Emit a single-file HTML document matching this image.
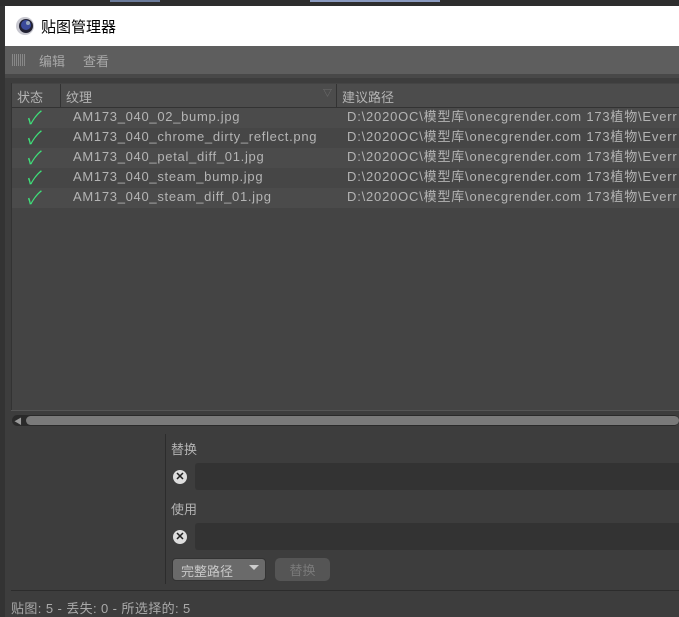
<!DOCTYPE html>
<html><head><meta charset="utf-8"><style>
*{margin:0;padding:0;box-sizing:border-box}
body{width:679px;height:617px;overflow:hidden;background:#3d3d3d;font-family:"Liberation Sans","Noto Sans CJK SC",sans-serif;font-size:13px;color:#b4b4b4;position:relative}
.abs{position:absolute}
.row{position:absolute;left:12px;width:667px;height:20px;line-height:20px;top:0}
.row .n{position:absolute;left:61px;letter-spacing:.7px;top:-1px}
.row .p{position:absolute;left:335px;white-space:nowrap;letter-spacing:.8px;top:-1px}
.chk{position:absolute;left:16px;top:1px;color:#3fe07a;font-size:18px;line-height:18px;transform:skewX(-12deg)}
</style></head><body>
<div class="abs" style="left:0;top:0;width:679px;height:6px;background:#2e2e2e"></div>
<div class="abs" style="left:110px;top:0;width:50px;height:2px;background:#6a7a9a"></div>
<div class="abs" style="left:310px;top:0;width:130px;height:2px;background:#8a9ac0"></div>
<div class="abs" style="left:0;top:6px;width:5px;height:611px;background:#333"></div>
<div class="abs" style="left:5px;top:6px;width:674px;height:40px;background:#fff"></div>
<svg class="abs" style="left:15px;top:16px" width="20" height="20"><circle cx="10" cy="10" r="9" fill="#c8c8d0"/><circle cx="11" cy="10" r="7" fill="#223"/><circle cx="11" cy="9" r="5" fill="#3a4a9a"/><circle cx="13" cy="7" r="2" fill="#9ab"/></svg>
<div class="abs" style="left:41px;top:16px;font-size:15px;color:#000">贴图管理器</div>
<div class="abs" style="left:5px;top:46px;width:674px;height:28px;background:#5e5e5e"></div>
<div class="abs" style="left:12px;top:54px;width:14px;height:12px;background:repeating-linear-gradient(90deg,#888 0 1px,transparent 1px 2px),repeating-linear-gradient(0deg,#5e5e5e 0 1px,transparent 1px 2px)"></div>
<div class="abs" style="left:39px;top:51px;color:#a8a8a8">编辑</div>
<div class="abs" style="left:83px;top:51px;color:#a8a8a8">查看</div>
<div class="abs" style="left:5px;top:74px;width:674px;height:4px;background:#484848"></div>
<div class="abs" style="left:11px;top:83px;width:668px;height:327px;background:#444;border-left:1px solid #333"></div>
<div class="abs" style="left:12px;top:84px;width:667px;height:24px;background:#4c4c4c;border-bottom:1px solid #333"></div>
<div class="abs" style="left:60px;top:84px;width:1px;height:24px;background:#333"></div>
<div class="abs" style="left:336px;top:84px;width:1px;height:24px;background:#333"></div>
<div class="abs" style="left:17px;top:87px">状态</div>
<div class="abs" style="left:66px;top:87px">纹理</div>
<div class="abs" style="left:323px;top:86px;font-size:9px;color:#777">▽</div>
<div class="abs" style="left:342px;top:87px">建议路径</div>
<div class="row" style="top:108px;background:#4b4b4b"><span class="chk">✓</span><span class="n">AM173_040_02_bump.jpg</span><span class="p">D:\2020OC\模型库\onecgrender.com 173植物\Everr</span></div>
<div class="row" style="top:128px;background:#464646"><span class="chk">✓</span><span class="n">AM173_040_chrome_dirty_reflect.png</span><span class="p">D:\2020OC\模型库\onecgrender.com 173植物\Everr</span></div>
<div class="row" style="top:148px;background:#4b4b4b"><span class="chk">✓</span><span class="n">AM173_040_petal_diff_01.jpg</span><span class="p">D:\2020OC\模型库\onecgrender.com 173植物\Everr</span></div>
<div class="row" style="top:168px;background:#464646"><span class="chk">✓</span><span class="n">AM173_040_steam_bump.jpg</span><span class="p">D:\2020OC\模型库\onecgrender.com 173植物\Everr</span></div>
<div class="row" style="top:188px;background:#4b4b4b"><span class="chk">✓</span><span class="n">AM173_040_steam_diff_01.jpg</span><span class="p">D:\2020OC\模型库\onecgrender.com 173植物\Everr</span></div>
<div class="abs" style="left:11px;top:410px;width:668px;height:1px;background:#555"></div>
<div class="abs" style="left:12px;top:415px;width:667px;height:11px;background:#2a2a2a;border-radius:6px"></div>
<div class="abs" style="left:26px;top:416px;width:653px;height:9px;background:#7a7a7a;border-radius:5px"></div>
<div class="abs" style="left:14px;top:416px;font-size:8px;color:#999">◀</div>
<div class="abs" style="left:165px;top:434px;width:1px;height:150px;background:#2c2c2c"></div>
<div class="abs" style="left:171px;top:439px">替换</div>
<div class="abs" style="left:173px;top:470px;width:14px;height:14px;border-radius:50%;background:#ddd;color:#222;font-size:11px;line-height:14px;text-align:center;font-weight:bold">✕</div>
<div class="abs" style="left:195px;top:463px;width:484px;height:27px;background:#333;border-radius:3px 0 0 3px"></div>
<div class="abs" style="left:171px;top:499px">使用</div>
<div class="abs" style="left:173px;top:530px;width:14px;height:14px;border-radius:50%;background:#ddd;color:#222;font-size:11px;line-height:14px;text-align:center;font-weight:bold">✕</div>
<div class="abs" style="left:195px;top:523px;width:484px;height:27px;background:#333;border-radius:3px 0 0 3px"></div>
<div class="abs" style="left:172px;top:558px;width:94px;height:23px;background:#6a6a6a;border-radius:4px;border:1px solid #333;color:#c8c8c8;padding:2px 8px">完整路径<span style="position:absolute;right:6px;top:6px;width:0;height:0;border-left:5px solid transparent;border-right:5px solid transparent;border-top:5px solid #ccc"></span></div>
<div class="abs" style="left:275px;top:558px;width:55px;height:23px;background:#555;border-radius:5px;color:#7a7a7a;text-align:center;padding-top:2px">替换</div>
<div class="abs" style="left:11px;top:590px;width:668px;height:1px;background:#2c2c2c"></div>
<div class="abs" style="left:11px;top:598px;font-size:13px;color:#aaa;letter-spacing:.4px">贴图: 5 - 丢失: 0 - 所选择的: 5</div>
</body></html>
